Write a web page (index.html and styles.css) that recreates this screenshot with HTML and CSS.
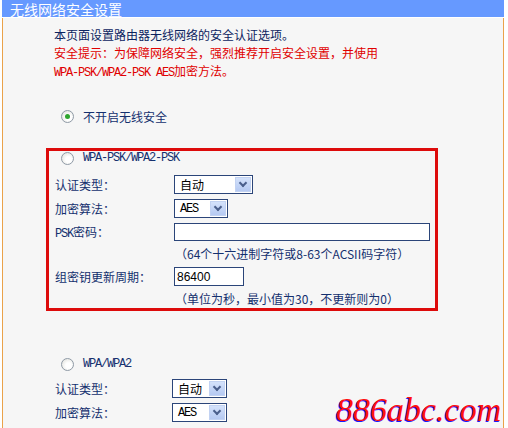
FILE: index.html
```html
<!DOCTYPE html>
<html lang="zh-CN">
<head>
  <meta charset="UTF-8">
  <title>无线网络安全设置</title>
  <link rel="stylesheet" href="styles.css">
</head>
<body>
  <div class="panel">
    <div class="title"><span>无线网络安全设置</span></div>
    <div class="content">
      <p class="intro">本页面设置路由器无线网络的安全认证选项。</p>
      <p class="tip">安全提示：为保障网络安全，强烈推荐开启安全设置，并使用<br><span class="mono">WPA-PSK/WPA2-PSK AES</span>加密方法。</p>

      <div class="option first"><span class="radio checked"></span>不开启无线安全</div>

      <div class="mode boxed">
        <div class="option"><span class="radio"></span><span class="mono">WPA-PSK/WPA2-PSK</span></div>
        <div class="row r1">
          <span class="label">认证类型：</span>
          <span class="select w79">自动<span class="arrow"></span></span>
        </div>
        <div class="row">
          <span class="label">加密算法：</span>
          <span class="select w54"><span class="mono">AES</span><span class="arrow"></span></span>
        </div>
        <div class="row">
          <span class="label"><span class="mono">PSK</span>密码：</span>
          <span class="input psk"></span>
        </div>
        <div class="row hint">
          <span class="label"></span>
          <span>（64个十六进制字符或8-63个ACSII码字符）</span>
        </div>
        <div class="row">
          <span class="label">组密钥更新周期：</span>
          <span class="input period">86400</span>
        </div>
        <div class="row hint">
          <span class="label"></span>
          <span>（单位为秒，最小值为30，不更新则为0）</span>
        </div>
      </div>

      <div class="mode second">
        <div class="option"><span class="radio"></span><span class="mono">WPA/WPA2</span></div>
        <div class="row r1">
          <span class="label">认证类型：</span>
          <span class="select w55">自动<span class="arrow"></span></span>
        </div>
        <div class="row">
          <span class="label">加密算法：</span>
          <span class="select w55"><span class="mono">AES</span><span class="arrow"></span></span>
        </div>
      </div>
    </div>
    <div class="mark">886abc.com</div>
  </div>
</body>
</html>
```

FILE: styles.css
```css
body {
  margin: 0;
  background: #ffffff;
  font-family: "Noto Sans CJK SC", sans-serif;
  font-size: 12px;
  color: #14306e;
  overflow: hidden;
}
.panel {
  position: relative;
  margin-left: 2px;
  width: 502px;
  height: 428px;
}
.title {
  height: 17px;
  background: #6699ff;
  color: #ffffff;
  font-size: 14px;
  padding-left: 8px;
  border-bottom: 1px solid #ffffff;
  display: flex;
  align-items: center;
}
.title span {
  line-height: 16px;
}
.content {
  height: 410px;
  background: #f6f6f6;
  border-left: 1px solid #eaa24a;
  border-right: 1px solid #eaa24a;
  padding-top: 8px;
}
p {
  margin: 0;
  line-height: 18px;
  padding-left: 51px;
}
.intro {
  color: #0c2460;
}
.tip {
  color: #e00000;
}
.mono {
  font-family: "Liberation Mono", monospace;
  font-size: 12px;
  letter-spacing: -1.2px;
}
.option {
  display: flex;
  align-items: center;
  height: 14px;
}
.option.first {
  margin-top: 27px;
  padding-left: 58px;
}
.radio {
  width: 11px;
  height: 11px;
  border: 1px solid #8f9aa6;
  border-radius: 50%;
  background: radial-gradient(circle at 60% 60%, #ffffff 30%, #dcdcd6 100%);
  margin-right: 9px;
  display: flex;
  align-items: center;
  justify-content: center;
}
.radio.checked::after {
  content: "";
  width: 5px;
  height: 5px;
  border-radius: 50%;
  background: #2ea52e;
}
.mode {
  margin-left: 43px;
}
.boxed {
  margin-top: 25px;
  width: 386px;
  height: 157px;
  border: 3px solid #dd0b0b;
}
.boxed .option {
  padding-left: 12px;
}
.second {
  margin-top: 46px;
  padding-left: 3px;
}
.second .option {
  padding-left: 12px;
}
.row {
  display: flex;
  align-items: center;
  margin-top: 5px;
  padding-left: 6px;
}
.row.r1 {
  margin-top: 10px;
}
.second .row.r1 {
  margin-top: 8px;
}
.label {
  width: 119px;
  flex: none;
}
.second .label {
  width: 117px;
}
.hint {
  height: 18px;
  margin-top: 3px;
  padding-left: 7px;
}
.select, .input {
  box-sizing: border-box;
  height: 19px;
  border: 1px solid #2b4579;
  background: #ffffff;
  color: #000000;
  display: flex;
  align-items: center;
  padding-left: 5px;
}
.select {
  justify-content: space-between;
  padding-right: 1px;
}
.w79 { width: 79px; }
.w54 { width: 54px; }
.w55 { width: 55px; }
.arrow {
  position: relative;
  width: 16px;
  height: 15px;
  background: linear-gradient(#d4e2fb, #b5c9f2);
  border: 1px solid #c2d2f2;
  box-sizing: border-box;
}
.arrow::after {
  content: "";
  position: absolute;
  left: 4px;
  top: 2px;
  width: 4px;
  height: 4px;
  border-right: 2px solid #4a5f8c;
  border-bottom: 2px solid #4a5f8c;
  transform: rotate(45deg);
}
.psk {
  width: 256px;
  height: 18px;
}
.period {
  width: 70px;
  font-family: "Liberation Sans", sans-serif;
  padding-left: 2px;
}
.mark {
  position: absolute;
  left: 334px;
  top: 391px;
  font-family: "Liberation Serif", serif;
  font-style: italic;
  font-size: 34px;
  color: #ff1010;
  text-shadow: -1px 1px 0 #1a1aff;
}
```
